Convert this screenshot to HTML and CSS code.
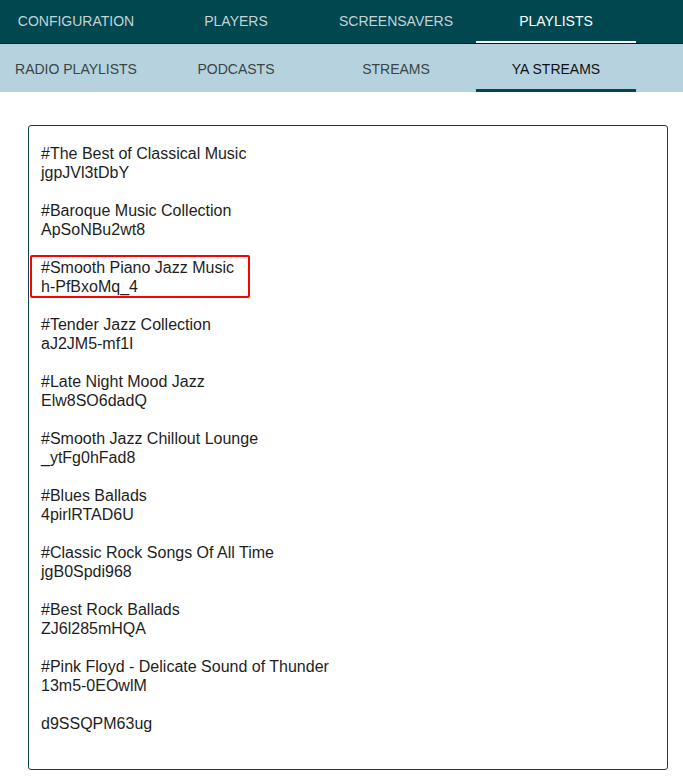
FILE: index.html
```html
<!DOCTYPE html>
<html>
<head>
<meta charset="utf-8">
<link rel="stylesheet" href="styles.css">
</head>
<body>
<nav class="tabs tabs-main">
  <div class="tab">Configuration</div>
  <div class="tab">Players</div>
  <div class="tab">Screensavers</div>
  <div class="tab active">Playlists</div>
</nav>
<nav class="tabs tabs-sub">
  <div class="tab">Radio Playlists</div>
  <div class="tab">Podcasts</div>
  <div class="tab">Streams</div>
  <div class="tab active">YA Streams</div>
</nav>
<main class="page">
  <div class="editor">
    <div class="entry"><div>#The Best of Classical Music</div><div>jgpJVl3tDbY</div></div>
    <div class="entry"><div>#Baroque Music Collection</div><div>ApSoNBu2wt8</div></div>
    <div class="entry highlight"><div>#Smooth Piano Jazz Music</div><div>h-PfBxoMq_4</div></div>
    <div class="entry"><div>#Tender Jazz Collection</div><div>aJ2JM5-mf1I</div></div>
    <div class="entry"><div>#Late Night Mood Jazz</div><div>Elw8SO6dadQ</div></div>
    <div class="entry"><div>#Smooth Jazz Chillout Lounge</div><div>_ytFg0hFad8</div></div>
    <div class="entry"><div>#Blues Ballads</div><div>4pirlRTAD6U</div></div>
    <div class="entry"><div>#Classic Rock Songs Of All Time</div><div>jgB0Spdi968</div></div>
    <div class="entry"><div>#Best Rock Ballads</div><div>ZJ6l285mHQA</div></div>
    <div class="entry"><div>#Pink Floyd - Delicate Sound of Thunder</div><div>13m5-0EOwlM</div></div>
    <div class="entry"><div>d9SSQPM63ug</div></div>
  </div>
</main>
</body>
</html>
```

FILE: styles.css
```css
html, body {
  margin: 0;
  padding: 0;
  background: #ffffff;
  font-family: "Liberation Sans", Arial, sans-serif;
}

.tabs {
  display: flex;
  padding-left: 0;
}

.tab {
  width: 160px;
  flex: 0 0 160px;
  display: flex;
  align-items: center;
  justify-content: center;
  text-transform: uppercase;
  font-size: 14px;
  box-sizing: border-box;
  border-bottom: 2px solid transparent;
}

.tab:first-child {
  margin-left: -4px;
}

.tabs-main {
  background: #00474f;
  height: 43px;
  border-bottom: 1px solid #0a1a1c;
}

.tabs-main .tab {
  color: #c5d3d5;
  padding-top: 0;
}

.tabs-main .tab.active {
  color: #ffffff;
  border-bottom-color: #ffffff;
}

.tabs-sub {
  background: #b5d2de;
  height: 48px;
}

.tabs-sub .tab {
  color: #3a4547;
  padding-top: 4px;
}

.tabs-sub .tab.active {
  color: #111;
  border-bottom: 3px solid #00474f;
  padding-top: 5px;
}

.page {
  padding: 33px 16px 0 28px;
}

.editor {
  width: 640px;
  height: 645px;
  box-sizing: border-box;
  border: 1px solid #0d4249;
  border-radius: 3px;
  padding: 18px 12px 0 12px;
  font-size: 16px;
  line-height: 19px;
  color: #1e1e1e;
}

.entry {
  margin-bottom: 19px;
}

.highlight {
  position: relative;
  width: fit-content;
}

.highlight::after {
  content: "";
  position: absolute;
  top: -3px;
  bottom: -2px;
  left: -11px;
  right: -16px;
  border: 2px solid #ff0000;
  border-radius: 2px;
}
```
